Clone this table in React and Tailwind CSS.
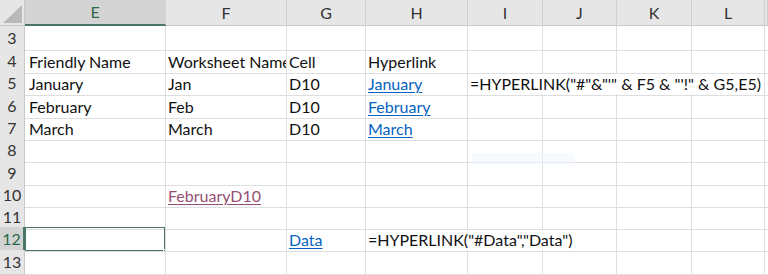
import React from 'react';

const GRID = 'grid grid-cols-[25px_141px_121px_79px_102px_75px_74px_75px_73px_1fr]';
const LETTERS = ['E', 'F', 'G', 'H', 'I', 'J', 'K', 'L', ''];

const ROWS = [
  { n: 3, h: 'h-[23px]', cells: [] },
  {
    n: 4, h: 'h-[22px]',
    cells: [
      { c: 0, v: 'Friendly Name' },
      { c: 1, v: 'Worksheet Name' },
      { c: 2, v: 'Cell' },
      { c: 3, v: 'Hyperlink' },
    ],
  },
  {
    n: 5, h: 'h-[23px]',
    cells: [
      { c: 0, v: 'January' },
      { c: 1, v: 'Jan' },
      { c: 2, v: 'D10' },
      { c: 3, v: 'January', link: true },
      { c: 4, span: 4, v: '=HYPERLINK("#"&"\'" & F5 & "\'!" & G5,E5)' },
    ],
  },
  {
    n: 6, h: 'h-[22px]',
    cells: [
      { c: 0, v: 'February' },
      { c: 1, v: 'Feb' },
      { c: 2, v: 'D10' },
      { c: 3, v: 'February', link: true },
    ],
  },
  {
    n: 7, h: 'h-[22px]',
    cells: [
      { c: 0, v: 'March' },
      { c: 1, v: 'March' },
      { c: 2, v: 'D10' },
      { c: 3, v: 'March', link: true },
    ],
  },
  { n: 8, h: 'h-[23px]', cells: [] },
  { n: 9, h: 'h-[22px]', cells: [] },
  { n: 10, h: 'h-[22px]', cells: [{ c: 1, v: 'FebruaryD10', visited: true }] },
  { n: 11, h: 'h-[22px]', cells: [] },
  {
    n: 12, h: 'h-[23px]', selected: true,
    cells: [
      { c: 0, v: '', selected: true },
      { c: 2, v: 'Data', link: true },
      { c: 3, span: 3, v: '=HYPERLINK("#Data","Data")' },
    ],
  },
  { n: 13, h: 'h-[23px]', cells: [] },
];

const SPAN = { 1: '', 3: 'col-span-3', 4: 'col-span-4' };

function Cell({ cell }) {
  const pad = cell.c === 0 ? 'pl-[4px]' : 'pl-[2px]';
  let text = <span>{cell.v}</span>;
  if (cell.link) {
    text = <span className="text-[#0563c1] underline underline-offset-[2px] decoration-1">{cell.v}</span>;
  } else if (cell.visited) {
    text = <span className="text-[#954f72] underline underline-offset-[2px] decoration-1">{cell.v}</span>;
  }
  return (
    <div
      className={`${SPAN[cell.span || 1]} relative flex items-end ${pad} pr-[1px] pb-[1px] border-r border-b border-[#dedede] whitespace-nowrap overflow-hidden text-[16px] leading-[20px] text-[#111]`}
    >
      {text}
      {cell.selected && (
        <div className="absolute -left-px -top-px right-[-1px] bottom-[-1px] border-2 border-[#4a7762]">
          <div className="absolute right-[-4px] bottom-[-4px] w-[5px] h-[5px] bg-[#4a7762] border border-white" />
        </div>
      )}
    </div>
  );
}

function Row({ row }) {
  const items = [];
  let c = 0;
  while (c < 9) {
    const cell = row.cells.find((x) => x.c === c);
    if (cell) {
      items.push(<Cell key={c} cell={cell} />);
      c += cell.span || 1;
    } else {
      items.push(<Cell key={c} cell={{ c, v: '' }} />);
      c += 1;
    }
  }
  return (
    <div className={`${GRID} ${row.h}`}>
      <div
        className={`flex items-center justify-center border-b border-[#d0d0d0] text-[16px] ${
          row.selected
            ? 'bg-[#d3d3d3] text-[#2a6a4a] border-r-2 border-r-[#4a7762]'
            : 'bg-[#e6e6e6] text-[#333] border-r border-r-[#c8c8c8]'
        }`}
      >
        {row.n}
      </div>
      {items}
    </div>
  );
}

export default function App() {
  return (
    <div className="relative w-[768px] h-[275px] overflow-hidden bg-white font-['Lato',sans-serif]">
      <div className={`${GRID} h-[26px]`}>
        <div className="bg-[#e6e6e6] border-r border-b border-[#c8c8c8] flex items-end justify-end pr-[2px] pb-[2px]">
          <svg width="19" height="18" viewBox="0 0 19 18">
            <polygon points="19,0 19,18 0,18" fill="#b9b9b9" />
          </svg>
        </div>
        {LETTERS.map((l, i) => (
          <div
            key={i}
            className={`flex items-center justify-center text-[16px] border-r border-[#d0d0d0] ${
              i === 0
                ? 'bg-[#d3d3d3] text-[#2a6a4a] border-b-2 border-b-[#4a7762]'
                : 'bg-[#e6e6e6] text-[#333] border-b border-b-[#c8c8c8]'
            }`}
          >
            {l}
          </div>
        ))}
      </div>
      {ROWS.map((r) => (
        <Row key={r.n} row={r} />
      ))}
      {/* faint ghost tooltip left over in the shot */}
      <div className="absolute left-[472px] top-[153px] w-[102px] h-[11px] bg-[#f0f5fc] opacity-60" />
    </div>
  );
}
